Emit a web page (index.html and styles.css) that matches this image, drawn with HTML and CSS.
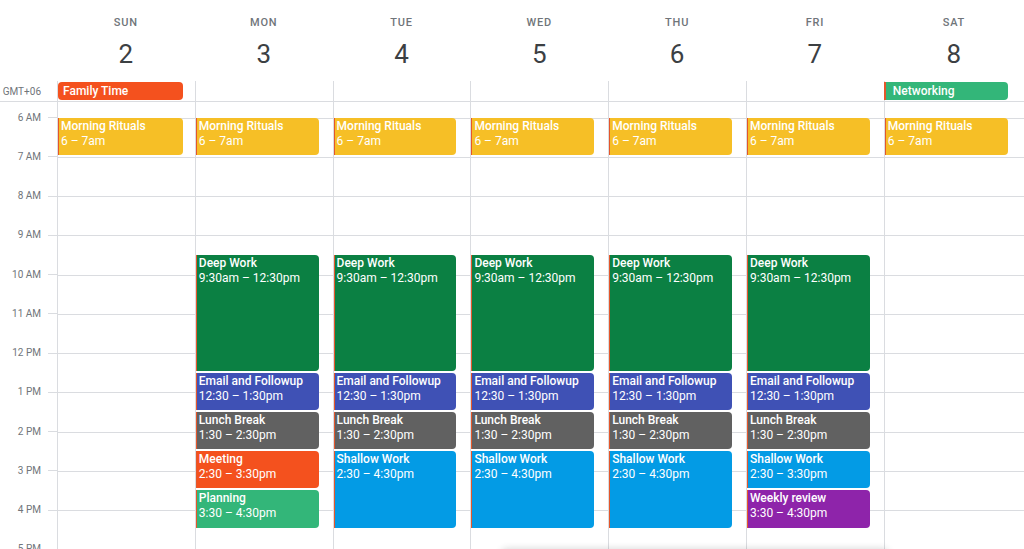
FILE: index.html
```html
<!DOCTYPE html>
<html lang="en">
<head>
<meta charset="utf-8">
<title>Week</title>
<link rel="stylesheet" href="styles.css">
</head>
<body>
<div class="cal">
  <div class="head">
    <div class="gutter"></div>
    <div class="day-heads">
      <div class="dh"><div class="dn">SUN</div><div class="dd">2</div></div>
      <div class="dh"><div class="dn">MON</div><div class="dd">3</div></div>
      <div class="dh"><div class="dn">TUE</div><div class="dd">4</div></div>
      <div class="dh"><div class="dn">WED</div><div class="dd">5</div></div>
      <div class="dh"><div class="dn">THU</div><div class="dd">6</div></div>
      <div class="dh"><div class="dn">FRI</div><div class="dd">7</div></div>
      <div class="dh"><div class="dn">SAT</div><div class="dd">8</div></div>
    </div>
  </div>

  <div class="allday">
    <div class="gutter tz">GMT+06</div>
    <div class="ad-cols">
      <div class="ad-cell"><div class="ad-ev tangerine">Family Time</div></div>
      <div class="ad-cell"></div>
      <div class="ad-cell"></div>
      <div class="ad-cell"></div>
      <div class="ad-cell"></div>
      <div class="ad-cell"></div>
      <div class="ad-cell"><div class="ad-ev sage accent">Networking</div></div>
    </div>
  </div>

  <div class="grid">
    <div class="times">
      <div class="times-inner">
        <div class="t"><span></span><i></i></div>
        <div class="t"><span>6 AM</span><i></i></div>
        <div class="t"><span>7 AM</span><i></i></div>
        <div class="t"><span>8 AM</span><i></i></div>
        <div class="t"><span>9 AM</span><i></i></div>
        <div class="t"><span>10 AM</span><i></i></div>
        <div class="t"><span>11 AM</span><i></i></div>
        <div class="t"><span>12 PM</span><i></i></div>
        <div class="t"><span>1 PM</span><i></i></div>
        <div class="t"><span>2 PM</span><i></i></div>
        <div class="t"><span>3 PM</span><i></i></div>
        <div class="t"><span>4 PM</span><i></i></div>
        <div class="t"><span>5 PM</span><i></i></div>
        <div class="t"><span>6 PM</span><i></i></div>
      </div>
    </div>
    <div class="cols">
      <!-- SUN -->
      <div class="col">
        <div class="hours"><div></div><div></div><div></div><div></div><div></div><div></div><div></div><div></div><div></div><div></div><div></div><div></div><div></div><div></div></div>
        <div class="ev banana" style="top:15.5px;height:37.25px"><b>Morning Rituals</b><span>6 – 7am</span></div>
      </div>
      <!-- MON -->
      <div class="col">
        <div class="hours"><div></div><div></div><div></div><div></div><div></div><div></div><div></div><div></div><div></div><div></div><div></div><div></div><div></div><div></div></div>
        <div class="ev banana" style="top:15.5px;height:37.25px"><b>Morning Rituals</b><span>6 – 7am</span></div>
        <div class="ev basil" style="top:152.875px;height:115.75px"><b>Deep Work</b><span>9:30am – 12:30pm</span></div>
        <div class="ev blueberry" style="top:270.625px;height:37.25px"><b>Email and Followup</b><span>12:30 – 1:30pm</span></div>
        <div class="ev graphite" style="top:309.875px;height:37.25px"><b>Lunch Break</b><span>1:30 – 2:30pm</span></div>
        <div class="ev tangerine" style="top:349.125px;height:37.25px"><b>Meeting</b><span>2:30 – 3:30pm</span></div>
        <div class="ev sage" style="top:388.375px;height:37.25px"><b>Planning</b><span>3:30 – 4:30pm</span></div>
      </div>
      <!-- TUE -->
      <div class="col">
        <div class="hours"><div></div><div></div><div></div><div></div><div></div><div></div><div></div><div></div><div></div><div></div><div></div><div></div><div></div><div></div></div>
        <div class="ev banana" style="top:15.5px;height:37.25px"><b>Morning Rituals</b><span>6 – 7am</span></div>
        <div class="ev basil" style="top:152.875px;height:115.75px"><b>Deep Work</b><span>9:30am – 12:30pm</span></div>
        <div class="ev blueberry" style="top:270.625px;height:37.25px"><b>Email and Followup</b><span>12:30 – 1:30pm</span></div>
        <div class="ev graphite" style="top:309.875px;height:37.25px"><b>Lunch Break</b><span>1:30 – 2:30pm</span></div>
        <div class="ev peacock" style="top:349.125px;height:76.5px"><b>Shallow Work</b><span>2:30 – 4:30pm</span></div>
      </div>
      <!-- WED -->
      <div class="col">
        <div class="hours"><div></div><div></div><div></div><div></div><div></div><div></div><div></div><div></div><div></div><div></div><div></div><div></div><div></div><div></div></div>
        <div class="ev banana" style="top:15.5px;height:37.25px"><b>Morning Rituals</b><span>6 – 7am</span></div>
        <div class="ev basil" style="top:152.875px;height:115.75px"><b>Deep Work</b><span>9:30am – 12:30pm</span></div>
        <div class="ev blueberry" style="top:270.625px;height:37.25px"><b>Email and Followup</b><span>12:30 – 1:30pm</span></div>
        <div class="ev graphite" style="top:309.875px;height:37.25px"><b>Lunch Break</b><span>1:30 – 2:30pm</span></div>
        <div class="ev peacock" style="top:349.125px;height:76.5px"><b>Shallow Work</b><span>2:30 – 4:30pm</span></div>
      </div>
      <!-- THU -->
      <div class="col">
        <div class="hours"><div></div><div></div><div></div><div></div><div></div><div></div><div></div><div></div><div></div><div></div><div></div><div></div><div></div><div></div></div>
        <div class="ev banana" style="top:15.5px;height:37.25px"><b>Morning Rituals</b><span>6 – 7am</span></div>
        <div class="ev basil" style="top:152.875px;height:115.75px"><b>Deep Work</b><span>9:30am – 12:30pm</span></div>
        <div class="ev blueberry" style="top:270.625px;height:37.25px"><b>Email and Followup</b><span>12:30 – 1:30pm</span></div>
        <div class="ev graphite" style="top:309.875px;height:37.25px"><b>Lunch Break</b><span>1:30 – 2:30pm</span></div>
        <div class="ev peacock" style="top:349.125px;height:76.5px"><b>Shallow Work</b><span>2:30 – 4:30pm</span></div>
      </div>
      <!-- FRI -->
      <div class="col">
        <div class="hours"><div></div><div></div><div></div><div></div><div></div><div></div><div></div><div></div><div></div><div></div><div></div><div></div><div></div><div></div></div>
        <div class="ev banana" style="top:15.5px;height:37.25px"><b>Morning Rituals</b><span>6 – 7am</span></div>
        <div class="ev basil" style="top:152.875px;height:115.75px"><b>Deep Work</b><span>9:30am – 12:30pm</span></div>
        <div class="ev blueberry" style="top:270.625px;height:37.25px"><b>Email and Followup</b><span>12:30 – 1:30pm</span></div>
        <div class="ev graphite" style="top:309.875px;height:37.25px"><b>Lunch Break</b><span>1:30 – 2:30pm</span></div>
        <div class="ev peacock" style="top:349.125px;height:37.25px"><b>Shallow Work</b><span>2:30 – 3:30pm</span></div>
        <div class="ev grape" style="top:388.375px;height:37.25px"><b>Weekly review</b><span>3:30 – 4:30pm</span></div>
      </div>
      <!-- SAT -->
      <div class="col">
        <div class="hours"><div></div><div></div><div></div><div></div><div></div><div></div><div></div><div></div><div></div><div></div><div></div><div></div><div></div><div></div></div>
        <div class="ev banana" style="top:15.5px;height:37.25px"><b>Morning Rituals</b><span>6 – 7am</span></div>
      </div>
    </div>
  </div>
  <div class="sheet"></div>
</div>
</body>
</html>
```

FILE: styles.css
```css
* { box-sizing: border-box; }
html, body { margin: 0; padding: 0; background: #fff; }
body {
  font-family: Roboto, "Liberation Sans", Arial, sans-serif;
  color: #3c4043;
  width: 1024px;
  height: 549px;
  overflow: hidden;
}
.cal { position: relative; width: 1024px; height: 549px; overflow: hidden; }

.gutter { width: 57px; flex: none; }

.head { display: flex; height: 81px; }
.day-heads { flex: 1; display: grid; grid-template-columns: repeat(6, 137.8px) 1fr; }
.dh { display: flex; flex-direction: column; align-items: center; padding-top: 15px; }
.dn {
  font-size: 11px; line-height: 16px; font-weight: 500;
  letter-spacing: 0.8px; color: #70757a;
}
.dd { font-size: 26px; line-height: 32px; color: #3c4043; margin-top: 7px; font-weight: 400; }

.allday { display: flex; height: 21px; border-bottom: 1px solid #dadce0; }
.tz {
  font-size: 10px; color: #70757a; text-align: right; padding-right: 16px;
  line-height: 20px; padding-top: 1px;
}
.ad-cols { flex: 1; display: grid; grid-template-columns: repeat(6, 137.8px) 1fr; }
.ad-cell { border-left: 1px solid #dadce0; padding: 1px 12px 0 0; }
.ad-cell:last-child { padding-right: 16px; }
.ad-ev {
  height: 18px; border-radius: 4px; color: #fff;
  font-size: 12px; font-weight: 500; line-height: 18px; padding-left: 5px;
  white-space: nowrap; overflow: hidden;
}
.ad-ev.accent { border-left: 2px solid #e4572b; border-radius: 0 4px 4px 0; padding-left: 7px; margin-left: -1px; }

.grid { display: flex; height: 447px; }
.times { width: 57px; flex: none; overflow: hidden; }
.times-inner { margin-top: -43.375px; }
.t { height: 39.25px; display: flex; align-items: center; justify-content: flex-end; }
.t span { font-size: 10px; color: #70757a; margin-right: 7px; line-height: 12px; }
.t i { width: 9px; height: 1px; background: #dadce0; display: block; }

.cols { flex: 1; display: grid; grid-template-columns: repeat(6, 137.8px) 1fr; }
.col { position: relative; border-left: 1px solid #dadce0; overflow: hidden; }
.hours { margin-top: -23.75px; }
.hours div { height: 39.25px; border-top: 1px solid #dadce0; }

.ev {
  position: absolute; left: -1px; right: 14px;
  border-left: 2px solid #e4572b;
  border-radius: 0 4px 4px 0;
  color: #fff; padding: 1px 4px 0 2px;
  font-size: 12px; line-height: 15px; overflow: hidden;
  display: flex; flex-direction: column;
  white-space: nowrap;
}
.col:first-child .ev { right: 12px; }
.col:last-child .ev { right: 16px; }
.ev b { font-weight: 500; }
.ev span { font-weight: 400; }

.banana { background: #f6bf26; }
.basil { background: #0b8043; }
.blueberry { background: #3f51b5; }
.graphite { background: #616161; }
.tangerine { background: #f4511e; }
.sage { background: #33b679; }
.peacock { background: #039be5; }
.grape { background: #8e24aa; }

.sheet {
  position: absolute; left: 500px; top: 549px; width: 390px; height: 40px;
  background: #fff; border-radius: 8px;
  box-shadow: 0 -1px 6px rgba(60, 64, 67, 0.18);
}
```
